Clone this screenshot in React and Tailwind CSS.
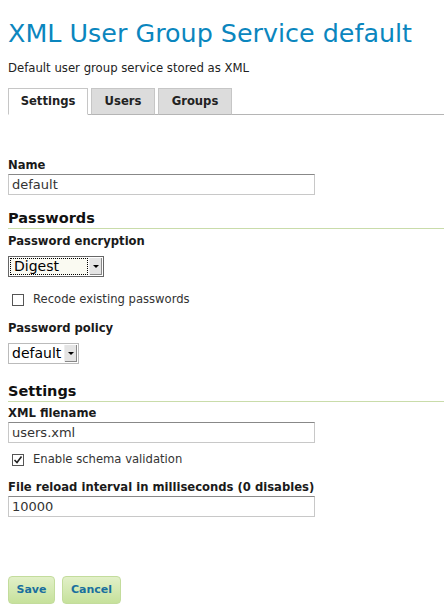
import { useState } from 'react';

const font = { fontFamily: '"DejaVu Sans", Verdana, sans-serif' };

function Label({ children }) {
  return <div className="text-[11.6px] font-bold leading-[14px] text-[#1a1a1a]">{children}</div>;
}

function TextField({ value }) {
  return (
    <input
      defaultValue={value}
      className="mt-[2px] block h-[21px] w-[307px] border border-[#c8c8c8] border-t-[#888] px-[3px] text-[13px] text-[#333] outline-none"
      style={font}
    />
  );
}

function Section({ title }) {
  return (
    <div className="border-b border-[#c9dcaa] pb-[1px] text-[14.5px] font-bold leading-[18px] text-[#111]">
      {title}
    </div>
  );
}

function FakeSelect({ value, width, focused }) {
  return (
    <div
      className={`flex h-[21px] items-stretch border ${focused ? 'border-[#666]' : 'border-[#bbb]'} bg-white`}
      style={{ width }}
    >
      <div
        className={`flex flex-1 items-center pl-[3px] text-[14px] text-black ${
          focused ? 'm-[1px] border border-dotted border-black bg-[#fafaf2]' : ''
        }`}
      >
        {value}
      </div>
      <div className="my-[1px] mr-[1px] flex w-[13px] items-center justify-center border-l border-[#eee] bg-[#e4e4e4] shadow-[inset_-1px_-1px_0_#888]">
        <div className="h-0 w-0 border-x-[3px] border-t-[3px] border-x-transparent border-t-black" />
      </div>
    </div>
  );
}

function Check({ checked, label }) {
  return (
    <label className="flex items-center gap-[9px] pl-[4px] text-[11.6px] text-[#333]">
      <span className="flex h-[12px] w-[12px] items-center justify-center border border-[#555] bg-white">
        {checked && (
          <svg width="10" height="10" viewBox="0 0 10 10">
            <path d="M1.5 5 L4 7.5 L8.5 1.5" fill="none" stroke="#222" strokeWidth="1.6" />
          </svg>
        )}
      </span>
      {label}
    </label>
  );
}

export default function App() {
  const [activeTab, setActiveTab] = useState('settings');

  const tabs = [
    { id: 'settings', label: 'Settings', w: 'w-[80px]' },
    { id: 'users', label: 'Users', w: 'w-[64px]' },
    { id: 'groups', label: 'Groups', w: 'w-[74px]' },
  ];

  return (
    <div className="min-h-[613px] w-[444px] bg-white pl-[8px]" style={font}>
      {/* Header */}
      <h1 className="pt-[17px] text-[25.4px] leading-[32px] text-[#0b86be]">XML User Group Service default</h1>
      <p className="mt-[12px] text-[11.7px] leading-[15px] text-[#222]">Default user group service stored as XML</p>

      {/* Tabs */}
      <div className="mt-[12px] flex gap-[3px] border-b border-[#b5b5b5]">
        {tabs.map((tab) => (
          <button
            key={tab.id}
            onClick={() => setActiveTab(tab.id)}
            className={`-mb-px h-[27px] ${tab.w} border border-[#c6c6c6] text-[11.6px] font-bold text-[#222] ${
              activeTab === tab.id ? 'border-b-white bg-white' : 'border-b-[#b5b5b5] bg-[#dcdcdc]'
            }`}
          >
            {tab.label}
          </button>
        ))}
      </div>

      {/* Form */}
      <div className="mt-[43px]">
        <Label>Name</Label>
        <TextField value="default" />

        <div className="mt-[14px]">
          <Section title="Passwords" />
        </div>
        <div className="mt-[5px]">
          <Label>Password encryption</Label>
        </div>
        <div className="mt-[8px]">
          <FakeSelect value="Digest" width="96px" focused />
        </div>
        <div className="mt-[14px]">
          <Check label="Recode existing passwords" />
        </div>
        <div className="mt-[13px]">
          <Label>Password policy</Label>
        </div>
        <div className="mt-[8px]">
          <FakeSelect value="default" width="71px" />
        </div>

        <div className="mt-[18px]">
          <Section title="Settings" />
        </div>
        <div className="mt-[4px]">
          <Label>XML filename</Label>
        </div>
        <TextField value="users.xml" />
        <div className="mt-[8px]">
          <Check checked label="Enable schema validation" />
        </div>
        <div className="mt-[11px]">
          <Label>File reload interval in milliseconds (0 disables)</Label>
        </div>
        <TextField value="10000" />

        {/* Buttons */}
        <div className="mt-[59px] flex gap-[7px]">
          <button className="h-[28px] w-[47px] rounded-[4px] border border-[#c3dc9c] bg-gradient-to-b from-[#e2f0c8] to-[#c6e19b] text-[11px] font-bold text-[#1a6f9e]">
            Save
          </button>
          <button className="h-[28px] w-[59px] rounded-[4px] border border-[#c3dc9c] bg-gradient-to-b from-[#e2f0c8] to-[#c6e19b] text-[11px] font-bold text-[#1a6f9e]">
            Cancel
          </button>
        </div>
      </div>
    </div>
  );
}
